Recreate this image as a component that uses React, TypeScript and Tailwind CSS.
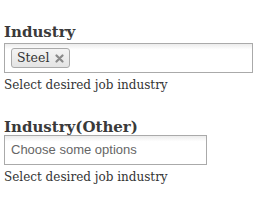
const serif = "font-['DejaVu_Serif',Georgia,serif]";

export default function App() {
    return (
        <div className={`w-[260px] h-[201px] bg-white px-[4px] pt-[22px] text-[#333] ${serif}`}>
            <div className="flex flex-col">
                <label className="text-[15px] font-bold leading-[20px] text-[#3a3a3a]">Industry</label>
                <div className="mt-[1px] w-[249px] h-[30px] border border-[#aaa] bg-gradient-to-b from-[#eee] from-[2%] to-white to-[20%] flex items-center px-[6px]">
                    <span className={`flex items-center h-[20px] pl-[5px] pr-[5px] rounded-[3px] border border-[#aaa] bg-gradient-to-b from-[#f4f4f4] to-[#e4e4e4] text-[12.5px] text-[#333] gap-[6px] ${serif}`}>
                        Steel
                        <svg width="9" height="9" viewBox="0 0 9 9" className="text-[#8a8a8a]">
                            <path d="M1.5 1.5 L7.5 7.5 M7.5 1.5 L1.5 7.5" stroke="currentColor" strokeWidth="2.2" strokeLinecap="round" />
                        </svg>
                    </span>
                </div>
                <p className="mt-[5px] text-[12px] leading-[14px]">Select desired job industry</p>
            </div>

            <div className="flex flex-col mt-[25px]">
                <label className="text-[15px] font-bold leading-[20px] text-[#3a3a3a]">Industry(Other)</label>
                <div className="mt-[-2px] w-[203px] h-[30px] border border-[#aaa] bg-gradient-to-b from-[#eee] from-[2%] to-white to-[20%] flex items-center px-[6px]">
                    <span className="font-['Liberation_Sans',Arial,sans-serif] text-[13px] text-[#666]">Choose some options</span>
                </div>
                <p className="mt-[5px] text-[12px] leading-[14px]">Select desired job industry</p>
            </div>
        </div>
    );
}
